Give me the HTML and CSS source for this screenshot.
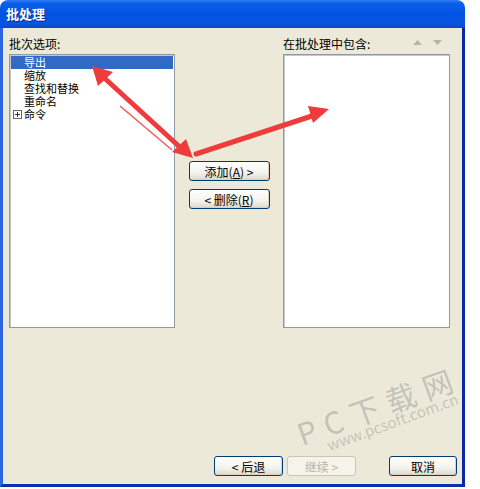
FILE: index.html
```html
<!DOCTYPE html>
<html lang="zh-CN">
<head>
    <meta charset="UTF-8">
    <title>批处理</title>
    <link rel="stylesheet" href="styles.css">
</head>
<body>

    <div class="window">
        <!-- Barre de titre -->
        <div class="titlebar">批处理</div>

        <div class="frame">
            <div class="panels">
                <div class="col">
                    <div class="label">批次选项:</div>
                    <div class="listbox">
                        <div class="item selected">导出</div>
                        <div class="item">缩放</div>
                        <div class="item">查找和替换</div>
                        <div class="item">重命名</div>
                        <div class="item"><span class="expander"></span>命令</div>
                    </div>
                </div>

                <div class="middle">
                    <button class="btn">添加(<u>A</u>) &gt;</button>
                    <button class="btn">&lt; 删除(<u>R</u>)</button>
                </div>

                <div class="col">
                    <div class="label label-row">
                        <span>在批处理中包含:</span>
                        <span class="arrows">
                            <svg width="9" height="6" viewBox="0 0 9 6"><path d="M0 5 L4.5 0 L9 5 Z" fill="#b7b4a6"/></svg>
                            <svg width="9" height="6" viewBox="0 0 9 6"><path d="M0 0 L9 0 L4.5 5 Z" fill="#b7b4a6"/></svg>
                        </span>
                    </div>
                    <div class="listbox"></div>
                </div>
            </div>

            <div class="footer">
                <button class="btn">&lt; 后退</button>
                <button class="btn" disabled>继续 &gt;</button>
                <button class="btn btn-cancel">取消</button>
            </div>
        </div>
    </div>

    <!-- Flèches rouges d'annotation -->
    <svg class="annotations" width="480" height="489" viewBox="0 0 480 489">
        <g stroke="#ee3b3b" stroke-width="5" stroke-linecap="round" fill="none">
            <path d="M100 74 L183 150"/>
            <path d="M196 154 L318 114"/>
        </g>
        <path d="M120 106 L172 150" stroke="#ee5b5b" stroke-width="1.5" fill="none"/>
        <g fill="#ee3b3b">
            <path d="M92 66 L113 72 L98 86 Z"/>
            <path d="M193 158 L172 152 L186 139 Z"/>
            <path d="M329 109 L313 123 L308 106 Z"/>
        </g>
    </svg>

    <!-- Filigrane -->
    <div class="watermark">
        <div class="wm-big">P C 下 载 网</div>
        <div class="wm-small">www.pcsoft.com.cn</div>
    </div>

</body>
</html>
```

FILE: styles.css
```css
body {
    margin: 0;
    background-color: #fff;
    font-family: "Noto Sans CJK SC", "Liberation Sans", sans-serif;
    font-size: 12px;
    color: #000;
}
.window {
    width: 465px;
    height: 487px;
    display: flex;
    flex-direction: column;
}
.titlebar {
    height: 28px;
    line-height: 28px;
    padding-left: 6px;
    color: #fff;
    font-weight: bold;
    font-size: 13px;
    border-radius: 8px 8px 0 0;
    background: linear-gradient(to bottom, #2f7bf5 0%, #0a5fe8 12%, #0253e3 50%, #0855dd 85%, #0a48c8 100%);
    text-shadow: 1px 1px 0 #0a2a8a;
}
.frame {
    flex: 1;
    display: flex;
    flex-direction: column;
    background-color: #ece9d8;
    border-left: 3px solid #2b66e0;
    border-right: 3px solid #0b26a8;
    border-bottom: 3px solid #0b2fb0;
}
.panels {
    display: flex;
    padding: 9px 0 0 6px;
}
.col {
    display: flex;
    flex-direction: column;
}
.label {
    height: 17px;
    line-height: 14px;
}
.label-row {
    display: flex;
    justify-content: space-between;
    width: 167px;
}
.arrows {
    display: flex;
    gap: 11px;
    padding: 3px 8px 0 0;
}
.listbox {
    width: 162px;
    height: 270px;
    background-color: #fff;
    border: 1px solid #8f9aa6;
    padding: 1px;
    box-shadow: inset 1px 1px 0 #c4c8cc;
}
.col:last-child .listbox {
    width: 163px;
}
.item {
    height: 13px;
    line-height: 13px;
    font-size: 11px;
    padding-left: 13px;
    position: relative;
}
.item.selected {
    background-color: #316ac5;
    color: #fff;
}
.expander {
    position: absolute;
    left: 2px;
    top: 2px;
    width: 7px;
    height: 7px;
    border: 1px solid #666;
    background:
        linear-gradient(#333, #333) center / 5px 1px no-repeat,
        linear-gradient(#333, #333) center / 1px 5px no-repeat;
}
.middle {
    width: 108px;
    display: flex;
    flex-direction: column;
    align-items: center;
    gap: 8px;
    padding-top: 124px;
}
.btn {
    width: 81px;
    height: 20px;
    padding: 0;
    font-family: inherit;
    font-size: 12px;
    color: #000;
    border: 1px solid #003c74;
    border-radius: 3px;
    background: linear-gradient(to bottom, #ffffff 0%, #f4f3ee 60%, #dcd9c9 100%);
    box-shadow: inset -1px -1px 0 #d6d0c5;
}
.btn u {
    text-decoration: underline;
}
.btn:disabled {
    color: #b8b4a2;
    border-color: #c9c7ba;
    background: #f5f4ea;
    box-shadow: none;
}
.footer {
    margin-top: auto;
    display: flex;
    padding: 0 0 8px 211px;
    gap: 4px;
}
.footer .btn {
    width: 69px;
}
.footer .btn-cancel {
    margin-left: 29px;
    width: 68px;
}
.annotations {
    position: absolute;
    left: 0;
    top: 0;
    pointer-events: none;
}
.watermark {
    position: absolute;
    left: 292px;
    top: 418px;
    transform: rotate(-20deg);
    transform-origin: left top;
    color: rgba(120, 120, 120, 0.35);
    pointer-events: none;
}
.wm-big {
    font-size: 30px;
    line-height: 34px;
    letter-spacing: 1px;
    white-space: nowrap;
}
.wm-small {
    font-size: 15px;
    line-height: 16px;
    margin: -4px 0 0 24px;
    white-space: nowrap;
}
```
